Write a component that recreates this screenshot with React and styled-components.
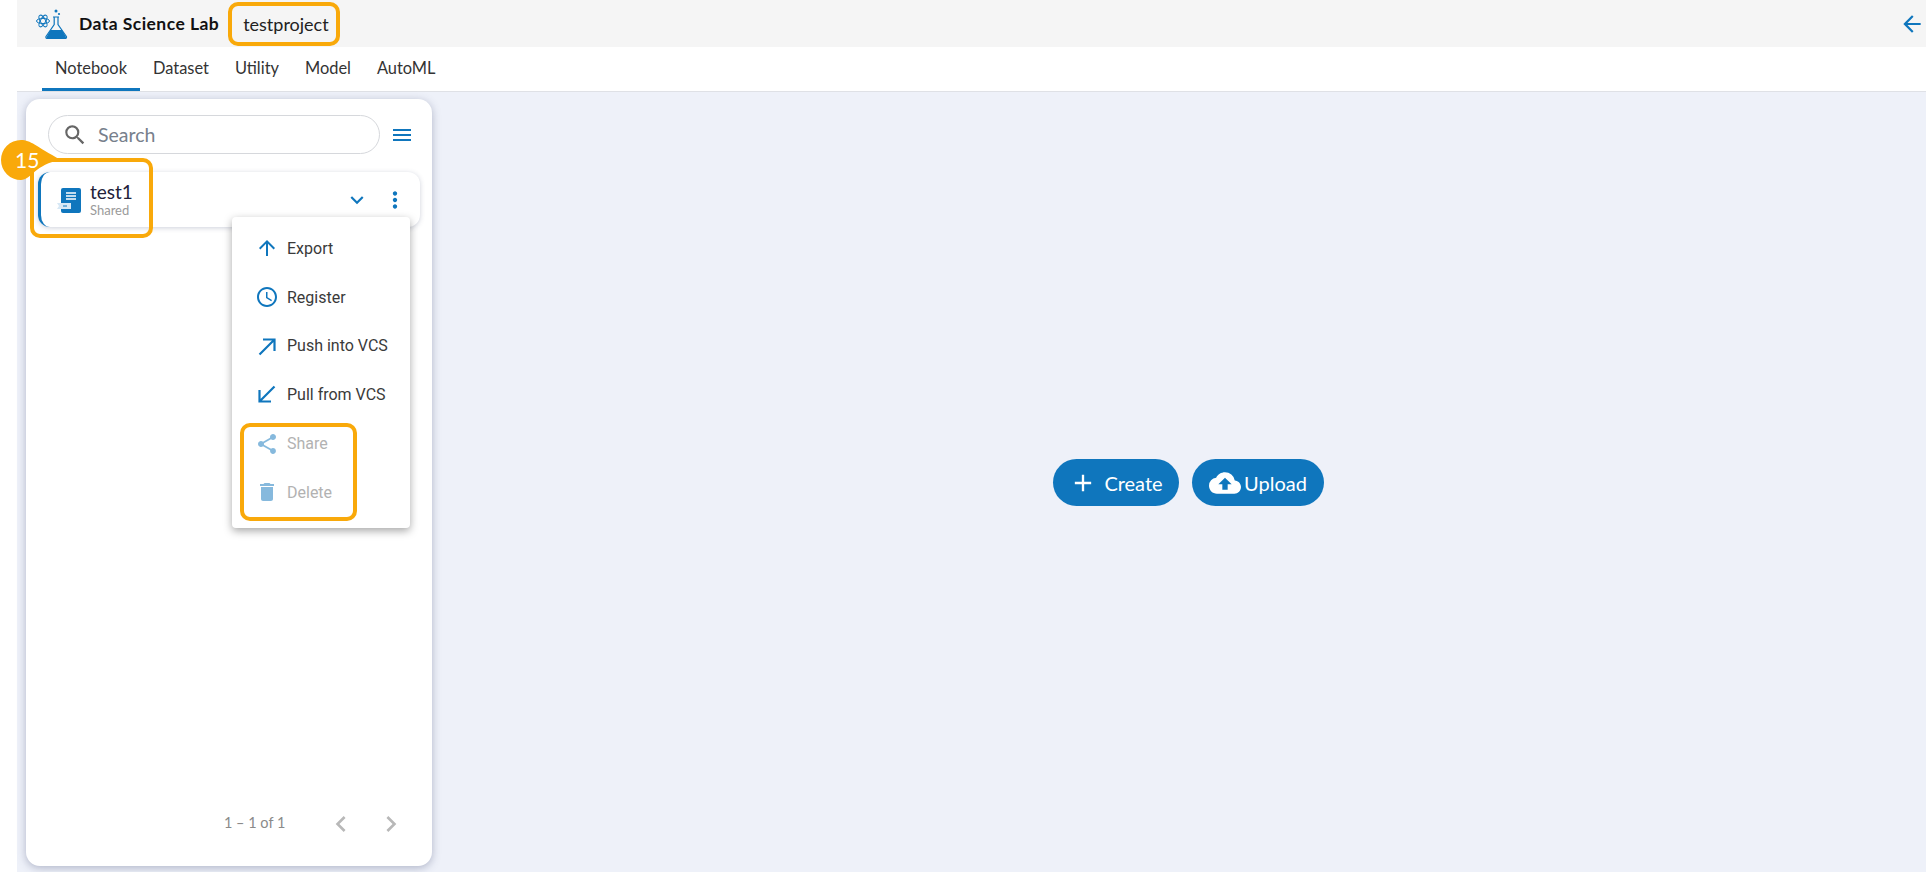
import styled, { createGlobalStyle } from "styled-components"
import {
    MdSearch, MdMenu, MdKeyboardArrowDown, MdMoreVert, MdArrowUpward, MdArrowBack,
    MdShare, MdDelete, MdAdd, MdCloudUpload, MdChevronLeft, MdChevronRight, MdAccessTime,
} from "react-icons/md"

const BLUE = "#0f76bd"
const ORANGE = "#f9a90a"

const Global = createGlobalStyle`
    html, body {
        margin: 0;
        padding: 0;
        background: #fff;
    }
    body {
        font-family: "Lato", "Noto Sans", sans-serif;
    }
`

const Page = styled.div`
    position: relative;
    width: 1926px;
    height: 872px;
    overflow: hidden;
    padding-left: 17px;
    box-sizing: border-box;
    display: flex;
    flex-direction: column;
`

const TopBar = styled.header`
    height: 47px;
    flex-shrink: 0;
    background: #f5f5f5;
    display: flex;
    align-items: center;
    padding-left: 19px;
`

const Brand = styled.div`
    font-size: 17.5px;
    letter-spacing: 0.45px;
    font-weight: 700;
    color: #111;
    margin-left: 11px;
`

const Project = styled.div`
    font-size: 18px;
    color: #222;
    margin-left: 24px;
`

const BackButton = styled.div`
    margin-left: auto;
    margin-right: 1px;
    display: flex;
    color: ${BLUE};
    font-size: 26px;
`

const Tabs = styled.nav`
    height: 45px;
    flex-shrink: 0;
    box-sizing: border-box;
    display: flex;
    padding-left: 25px;
    border-bottom: 1px solid #dfe1e6;
`

const Tab = styled.div`
    padding: 0 13px;
    height: 44px;
    box-sizing: border-box;
    display: flex;
    align-items: center;
    font-size: 16.4px;
    color: #333;
    border-bottom: 3px solid ${(p) => (p.$active ? BLUE : "transparent")};
`

const Main = styled.main`
    flex: 1;
    min-height: 0;
    background: #eef1f9;
    display: flex;
    padding: 7px 0 6px 9px;
`

const Panel = styled.aside`
    width: 406px;
    flex-shrink: 0;
    background: #fff;
    border-radius: 14px;
    box-shadow: 0 2px 8px rgba(60, 70, 110, 0.35);
    display: flex;
    flex-direction: column;
    padding: 16px 12px 0;
    box-sizing: border-box;
`

const SearchRow = styled.div`
    display: flex;
    align-items: center;
    padding-left: 10px;
    gap: 10px;
`

const SearchBox = styled.div`
    width: 332px;
    height: 39px;
    box-sizing: border-box;
    border: 1px solid #d6d8dc;
    border-radius: 20px;
    display: flex;
    align-items: center;
    padding-left: 13px;
    gap: 10px;
    font-size: 19.5px;
    color: #77808c;
`

const ItemCard = styled.div`
    margin-top: 18px;
    height: 55px;
    border-radius: 12px;
    border-left: 3px solid ${BLUE};
    box-shadow: 0 1px 5px rgba(60, 70, 110, 0.25);
    display: flex;
    align-items: center;
    padding-left: 16px;
    padding-right: 12px;
`

const ItemText = styled.div`
    display: flex;
    flex-direction: column;
    margin-left: 9px;
`

const ItemName = styled.div`
    font-size: 19px;
    line-height: 22px;
    color: #22223a;
`

const ItemMeta = styled.div`
    font-size: 13px;
    line-height: 15px;
    color: #9a9a9a;
`

const ItemActions = styled.div`
    margin-left: auto;
    display: flex;
    align-items: center;
    gap: 12px;
    color: ${BLUE};
`

const Pager = styled.div`
    margin-top: auto;
    height: 53px;
    display: flex;
    align-items: flex-start;
    padding-left: 186px;
    color: #8a8a8a;
    font-size: 14.5px;
`

const PagerLabel = styled.span`
    line-height: 20px;
    white-space: nowrap;
    margin-right: 40px;
`

const PagerIcon = styled.span`
    display: flex;
    color: #b8b8b8;
    margin-top: -5px;
    margin-right: 18px;
`

const Stage = styled.section`
    flex: 1;
    display: flex;
    align-items: center;
    justify-content: center;
    gap: 13px;
    padding-left: 19px;
`

const Pill = styled.button`
    height: 47px;
    width: ${(p) => p.$width}px;
    border: 0;
    border-radius: 24px;
    background: ${BLUE};
    color: #fff;
    font-family: inherit;
    font-size: 20px;
    display: flex;
    align-items: center;
    justify-content: center;
    gap: ${(p) => p.$gap}px;
    padding: 0;
`

const Menu = styled.div`
    position: absolute;
    left: 232px;
    top: 217px;
    width: 178px;
    height: 311px;
    box-sizing: border-box;
    background: #fff;
    border-radius: 4px;
    box-shadow: 0 3px 8px rgba(0, 0, 0, 0.35);
    padding: 7px 0;
    display: flex;
    flex-direction: column;
    font-family: "Roboto", sans-serif;
`

const MenuItem = styled.div`
    height: 48.8px;
    flex-shrink: 0;
    display: flex;
    align-items: center;
    padding-left: 23px;
    gap: 8px;
    font-size: 16px;
    color: ${(p) => (p.$disabled ? "#b2b2b2" : "#3a3a3a")};

    svg {
        color: ${BLUE};
        opacity: ${(p) => (p.$disabled ? 0.5 : 1)};
        flex-shrink: 0;
    }
`

const Highlight = styled.div`
    position: absolute;
    left: ${(p) => p.$x}px;
    top: ${(p) => p.$y}px;
    width: ${(p) => p.$w}px;
    height: ${(p) => p.$h}px;
    box-sizing: border-box;
    border: 4px solid ${ORANGE};
    border-radius: 10px;
`

const Badge = styled.div`
    position: absolute;
    left: 1px;
    top: 140px;
    width: 60px;
    height: 40px;
    color: #fff;
    font-size: 21px;
    line-height: 40px;

    span {
        position: absolute;
        left: 14px;
        top: 0;
    }
`

function FlaskLogo() {
    return (
        <svg width="32" height="30" viewBox="0 0 32 30" fill="none" stroke={BLUE}>
            <ellipse cx="7" cy="12" rx="6.5" ry="2.6" strokeWidth="1" />
            <ellipse cx="7" cy="12" rx="6.5" ry="2.6" strokeWidth="1" transform="rotate(60 7 12)" />
            <ellipse cx="7" cy="12" rx="6.5" ry="2.6" strokeWidth="1" transform="rotate(120 7 12)" />
            <path d="M17 8h6M18.2 8v7.5L10 27.5a1.4 1.4 0 0 0 1.2 2h18a1.4 1.4 0 0 0 1.2-2L22 15.5V8" strokeWidth="1.2" />
            <path d="M14.5 21h11.5l4 7a1 1 0 0 1-1 1.2H11.5a1 1 0 0 1-1-1.2z" fill={BLUE} stroke="none" />
            <circle cx="20" cy="2" r="1.5" fill={BLUE} stroke="none" />
            <circle cx="23" cy="5" r="1.1" fill={BLUE} stroke="none" />
        </svg>
    )
}

function NotebookIcon() {
    return (
        <svg width="24" height="26" viewBox="0 0 24 26">
            <rect x="4" y="1" width="20" height="25" rx="2" fill={BLUE} />
            <path d="M9 6h10M9 9h10M9 12h10" stroke="#fff" strokeWidth="1.5" />
            <path d="M0 16h14v6H0l2-3z" fill="#d7e8f5" />
            <path d="M6 19h4" stroke={BLUE} strokeWidth="1" />
        </svg>
    )
}

function DiagonalArrow({ flip }) {
    return (
        <svg width="24" height="24" viewBox="0 0 24 24" fill="none" stroke="currentColor" strokeWidth="2.2"
            style={{ transform: flip ? "rotate(180deg)" : "none" }}>
            <path d="M4.5 20.5 18.5 6.5M8 5.5h11.5V17" />
        </svg>
    )
}

function BadgeShape() {
    return (
        <svg width="60" height="40" viewBox="0 0 60 40">
            <path d="M20 0c10 0 14 6 40 20c-26 4-30 20-40 20a20 20 0 0 1 0-40z" fill={ORANGE} />
        </svg>
    )
}

function App() {
    return (
        <Page>
            <Global />

            <TopBar>
                <FlaskLogo />
                <Brand>Data Science Lab</Brand>
                <Project>testproject</Project>
                <BackButton><MdArrowBack /></BackButton>
            </TopBar>

            <Tabs>
                <Tab $active>Notebook</Tab>
                <Tab>Dataset</Tab>
                <Tab>Utility</Tab>
                <Tab>Model</Tab>
                <Tab>AutoML</Tab>
            </Tabs>

            <Main>
                <Panel>
                    <SearchRow>
                        <SearchBox>
                            <MdSearch size={26} color="#666" />
                            Search
                        </SearchBox>
                        <MdMenu size={24} color={BLUE} />
                    </SearchRow>

                    <ItemCard>
                        <NotebookIcon />
                        <ItemText>
                            <ItemName>test1</ItemName>
                            <ItemMeta>Shared</ItemMeta>
                        </ItemText>
                        <ItemActions>
                            <MdKeyboardArrowDown size={26} />
                            <MdMoreVert size={26} />
                        </ItemActions>
                    </ItemCard>

                    <Pager>
                        <PagerLabel>1 – 1 of 1</PagerLabel>
                        <PagerIcon><MdChevronLeft size={32} /></PagerIcon>
                        <PagerIcon><MdChevronRight size={32} /></PagerIcon>
                    </Pager>
                </Panel>

                <Stage>
                    <Pill $width={126} $gap={7}><MdAdd size={28} />Create</Pill>
                    <Pill $width={132} $gap={3}><MdCloudUpload size={32} />Upload</Pill>
                </Stage>
            </Main>

            <Menu>
                <MenuItem><MdArrowUpward size={24} />Export</MenuItem>
                <MenuItem><MdAccessTime size={24} />Register</MenuItem>
                <MenuItem><DiagonalArrow />Push into VCS</MenuItem>
                <MenuItem><DiagonalArrow flip />Pull from VCS</MenuItem>
                <MenuItem $disabled><MdShare size={24} />Share</MenuItem>
                <MenuItem $disabled><MdDelete size={24} />Delete</MenuItem>
            </Menu>

            <Highlight $x={228} $y={2} $w={112} $h={44} />
            <Highlight $x={30} $y={158} $w={123} $h={80} />
            <Highlight $x={240} $y={423} $w={117} $h={98} />
            <Badge>
                <BadgeShape />
                <span>15</span>
            </Badge>
        </Page>
    )
}

export default App
